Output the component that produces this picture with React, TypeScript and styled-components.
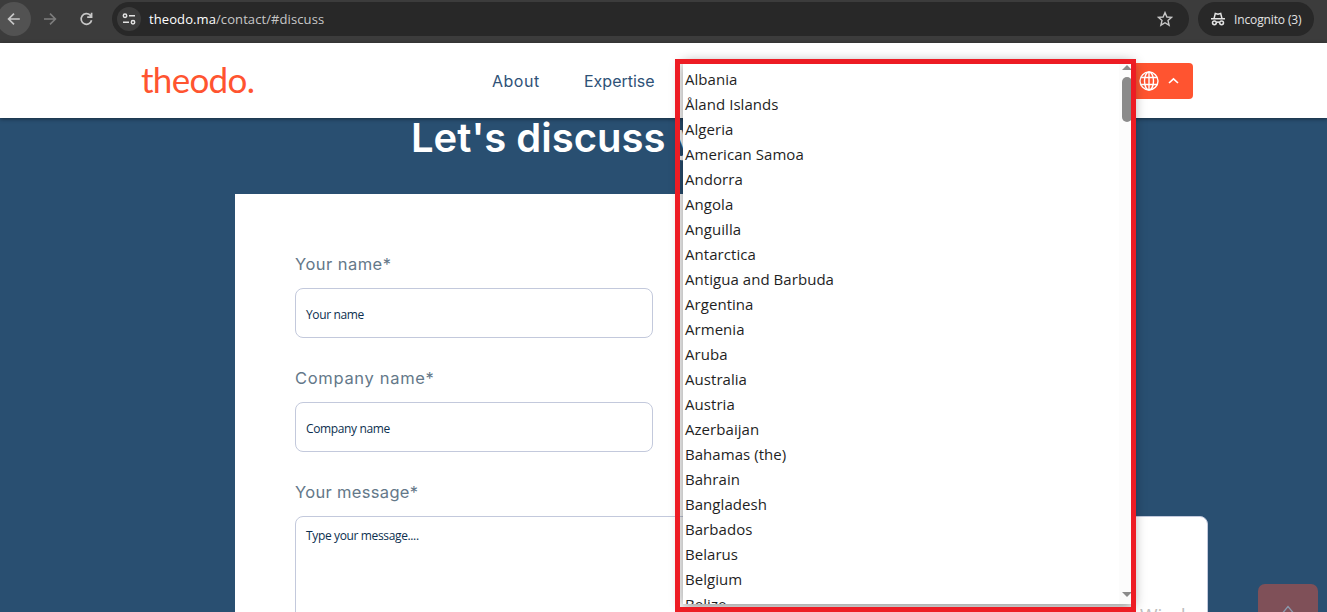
import React from "react";
import styled, { createGlobalStyle } from "styled-components";

const Global = createGlobalStyle`
  *, *::before, *::after { box-sizing: border-box; }
  html, body { margin: 0; padding: 0; overflow: hidden; }
  body { font-family: "Open Sans", sans-serif; background: #294f71; }
`;

const Page = styled.div`
  position: relative;
  width: 1327px;
  height: 612px;
  overflow: hidden;
  display: flex;
  flex-direction: column;
  background: #294f71;
`;

const BrowserBar = styled.div`
  flex: none;
  height: 43px;
  padding: 2px 13px 7px 0;
  display: flex;
  align-items: center;
  background: #3c3c3c;
`;

const BackButton = styled.div`
  width: 34px;
  height: 34px;
  margin-left: -3px;
  border-radius: 50%;
  background: #525252;
  display: grid;
  place-items: center;
`;

const NavGlyph = styled.div<{ $gap: number }>`
  display: grid;
  margin-left: ${(p) => p.$gap}px;
`;

const Omnibox = styled.div`
  width: 1077px;
  height: 34px;
  margin-left: 18px;
  padding: 0 16px 0 5px;
  border-radius: 17px;
  background: #282828;
  display: flex;
  align-items: center;
`;

const SiteInfo = styled.div`
  width: 24px;
  height: 24px;
  border-radius: 50%;
  background: #3c3c3c;
  display: grid;
  place-items: center;
`;

const Url = styled.div`
  flex: 1;
  margin-left: 8px;
  font-size: 13px;
  letter-spacing: 0.09px;
  color: #c7c7c7;
  b { font-weight: 400; color: #fff; }
`;

const IncognitoPill = styled.div`
  width: 116px;
  height: 34px;
  margin-left: 9px;
  padding-left: 12px;
  border-radius: 17px;
  background: #282828;
  color: #e3e3e3;
  font-size: 12px;
  letter-spacing: -0.13px;
  white-space: nowrap;
  display: flex;
  align-items: center;
  gap: 8px;
`;

const Header = styled.header`
  position: relative;
  z-index: 1;
  flex: none;
  height: 75px;
  padding: 0 134px 0 141px;
  display: flex;
  align-items: center;
  background: #fff;
  box-shadow: 0 1px 4px rgba(0, 0, 0, 0.45);
`;

const Logo = styled.div`
  width: 351px;
  padding-bottom: 3px;
  font-family: Lato, sans-serif;
  font-size: 35px;
  line-height: 42px;
  letter-spacing: -0.7px;
  color: #ff5430;
`;

const NavLink = styled.a<{ $width: number; $spacing: number }>`
  width: ${(p) => p.$width}px;
  font-family: Inter, sans-serif;
  font-size: 16px;
  line-height: 24px;
  letter-spacing: ${(p) => p.$spacing}px;
  color: #2f5277;
  white-space: nowrap;
`;

const LanguageButton = styled.div`
  width: 93px;
  height: 36px;
  margin-left: auto;
  padding-right: 14px;
  border-radius: 4px;
  background: #ff5430;
  display: flex;
  align-items: center;
  justify-content: flex-end;
  gap: 9px;
`;

const Hero = styled.main`
  flex: 1;
  min-height: 0;
  padding: 0 235px;
  display: flex;
  flex-direction: column;
`;

const Title = styled.h1`
  flex: none;
  margin: -4px 0 0 176px;
  height: 80px;
  font-family: Inter, sans-serif;
  font-weight: 600;
  font-size: 40px;
  line-height: 48px;
  color: #fff;
  white-space: nowrap;
`;

const Card = styled.form`
  flex: none;
  width: 857px;
  height: 560px;
  padding: 58px 60px 0;
  background: #fff;
`;

const Field = styled.div<{ $wide?: boolean }>`
  width: ${(p) => (p.$wide ? 913 : 358)}px;
  margin-bottom: 28px;
`;

const Label = styled.div<{ $spacing: number }>`
  height: 36px;
  font-family: Inter, sans-serif;
  font-size: 16.5px;
  line-height: 25px;
  letter-spacing: ${(p) => p.$spacing}px;
  color: #647889;
`;

const Box = styled.div<{ $tall?: boolean }>`
  height: ${(p) => (p.$tall ? 180 : 50)}px;
  padding: ${(p) => (p.$tall ? "10px" : "17px")} 10px 0;
  border: 1px solid #c3c9dc;
  border-radius: 8px;
  background: #fff;
  font-size: 12px;
  line-height: 17px;
  letter-spacing: -0.36px;
  color: #0c2f4f;
`;

const Popup = styled.div`
  position: absolute;
  z-index: 2;
  left: 683px;
  top: 60px;
  width: 450px;
  height: 544px;
  display: flex;
  background: #fff;
  box-shadow: 0 3px 12px rgba(0, 0, 0, 0.45);
`;

const Options = styled.div`
  flex: 1;
  padding: 7px 0 0 2px;
  overflow: hidden;
`;

const Option = styled.div`
  height: 25px;
  font-size: 15px;
  line-height: 25px;
  letter-spacing: 0.05px;
  color: #1f1f1f;
`;

const ScrollTrack = styled.div`
  width: 14px;
  padding: 5px 0 7px;
  background: #fcfcfc;
  display: flex;
  flex-direction: column;
  align-items: flex-end;
`;

const ScrollThumb = styled.div`
  width: 10px;
  height: 45px;
  margin: 7px 1px auto 0;
  border-radius: 5px;
  background: #8b8b8b;
`;

const Arrow = styled.svg`
  margin-right: 1px;
  flex: none;
`;

const Highlight = styled.div`
  position: absolute;
  z-index: 3;
  left: 675px;
  top: 59px;
  width: 461px;
  height: 553px;
  border: 5px solid #ed1c24;
`;

const ToTop = styled.div`
  position: absolute;
  left: 1258px;
  top: 584px;
  width: 60px;
  height: 60px;
  padding-top: 21px;
  border-radius: 7px;
  background: #7f5058;
  display: flex;
  justify-content: center;
`;

const Watermark = styled.div`
  position: absolute;
  left: 1140px;
  top: 603px;
  font-size: 19px;
  line-height: 24px;
  color: #bdbdbd;
`;

const countries = [
  "Albania", "Åland Islands", "Algeria", "American Samoa", "Andorra", "Angola", "Anguilla",
  "Antarctica", "Antigua and Barbuda", "Argentina", "Armenia", "Aruba", "Australia", "Austria",
  "Azerbaijan", "Bahamas (the)", "Bahrain", "Bangladesh", "Barbados", "Belarus", "Belgium", "Belize",
];

export default function App() {
  return (
    <Page>
      <Global />
      <BrowserBar>
        <BackButton>
          <svg width="14" height="14" viewBox="0 0 14 14" fill="none" stroke="#c7c7c7" strokeWidth="1.7">
            <path d="M12.8 7H2M7 1.6 1.6 7 7 12.4" />
          </svg>
        </BackButton>
        <NavGlyph $gap={12}>
          <svg width="14" height="14" viewBox="0 0 14 14" fill="none" stroke="#7d7d7d" strokeWidth="1.6">
            <path d="M1 7h11M7 1.6 12.4 7 7 12.4" />
          </svg>
        </NavGlyph>
        <NavGlyph $gap={22}>
          <svg width="15" height="14" viewBox="0 0 15 14" fill="none" stroke="#c7c7c7" strokeWidth="1.7">
            <path d="M12.6 8.2A5.3 5.3 0 1 1 11.2 3.2L12.4 4.6M12.6 .8V5.2H8.2" />
          </svg>
        </NavGlyph>
        <Omnibox>
          <SiteInfo>
            <svg width="14" height="12" viewBox="0 0 14 12" fill="none" stroke="#e3e3e3" strokeWidth="1.5">
              <circle cx="3" cy="2.7" r="1.7" />
              <path d="M7 2.7h6M1 9.2h6" />
              <circle cx="11" cy="9.2" r="1.7" />
            </svg>
          </SiteInfo>
          <Url><b>theodo.ma</b>/contact/#discuss</Url>
          <svg width="16" height="16" viewBox="0 0 16 16" fill="none" stroke="#c7c7c7" strokeWidth="1.4">
            <path d="M8 1.6 9.9 6l4.7.4-3.6 3.1 1.1 4.7L8 11.7l-4.1 2.5L5 9.5 1.4 6.4 6.1 6Z" />
          </svg>
        </Omnibox>
        <IncognitoPill>
          <svg width="16" height="14" viewBox="0 0 16 14" fill="none" stroke="#e3e3e3" strokeWidth="1.5">
            <path d="M1 6.8h14M4 6.6 5.3 1.5l2.7.8 2.7-.8L12 6.6M6.3 10.6q1.7-1 3.4 0" />
            <circle cx="4.4" cy="10.8" r="1.9" />
            <circle cx="11.6" cy="10.8" r="1.9" />
          </svg>
          Incognito (3)
        </IncognitoPill>
      </BrowserBar>
      <Header>
        <Logo>theodo.</Logo>
        <NavLink $width={92} $spacing={0.5}>About</NavLink>
        <NavLink $width={80} $spacing={0}>Expertise</NavLink>
        <LanguageButton>
          <svg width="20" height="20" viewBox="0 0 20 20" fill="none" stroke="#fff" strokeWidth="1.4">
            <circle cx="10" cy="10" r="9" />
            <ellipse cx="10" cy="10" rx="4.5" ry="9" />
            <path d="M10 1v18M2 6.5h16M2 13.5h16" />
          </svg>
          <svg width="11" height="7" viewBox="0 0 11 7" fill="none" stroke="#fff" strokeWidth="1.6">
            <path d="M1 6 5.5 1.8 10 6" />
          </svg>
        </LanguageButton>
      </Header>
      <Hero>
        <Title>Let's discuss y</Title>
        <Card>
          <Field><Label $spacing={0.46}>Your name*</Label><Box>Your name</Box></Field>
          <Field><Label $spacing={0.68}>Company name*</Label><Box>Company name</Box></Field>
          <Field $wide><Label $spacing={0.32}>Your message*</Label><Box $tall>Type your message....</Box></Field>
        </Card>
      </Hero>
      <Watermark>Windows</Watermark>
      <ToTop>
        <svg width="12" height="12" viewBox="0 0 12 12" fill="none" stroke="#8c9cb0" strokeWidth="1.3">
          <path d="M1 7.5 6 1.5l5 6" />
        </svg>
      </ToTop>
      <Popup>
        <Options>{countries.map((c) => <Option key={c}>{c}</Option>)}</Options>
        <ScrollTrack>
          <Arrow width="10" height="5" viewBox="0 0 10 5"><path d="M0 5 5 0l5 5Z" fill="#8b8b8b" /></Arrow>
          <ScrollThumb />
          <Arrow width="10" height="5" viewBox="0 0 10 5"><path d="M0 0 5 5l5-5Z" fill="#8b8b8b" /></Arrow>
        </ScrollTrack>
      </Popup>
      <Highlight />
    </Page>
  );
}
